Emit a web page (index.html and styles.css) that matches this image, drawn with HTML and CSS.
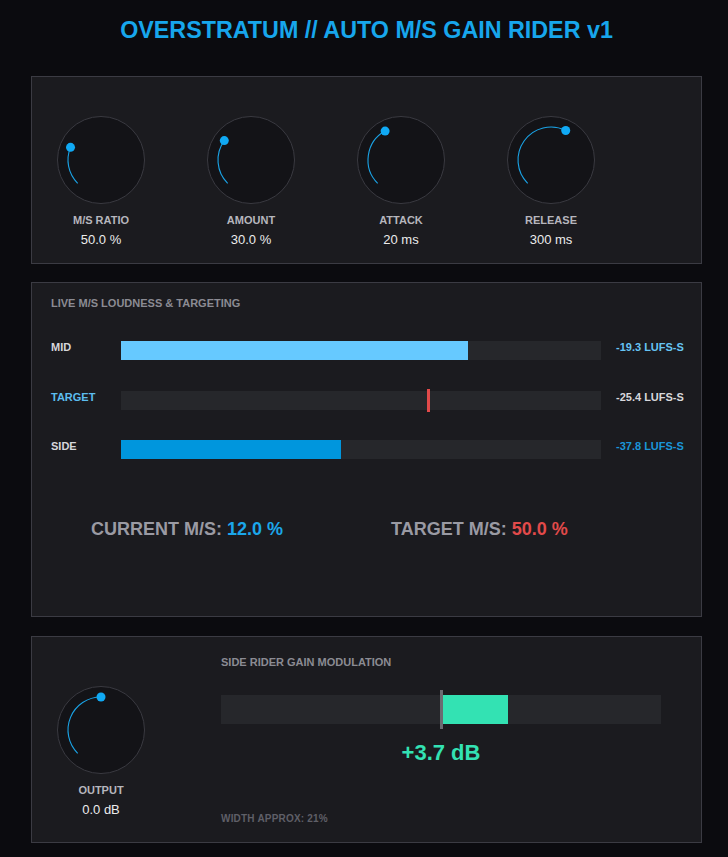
FILE: index.html
```html
<!DOCTYPE html>
<html lang="en">
<head>
<meta charset="utf-8">
<title>Overstratum Auto M/S Gain Rider</title>
<link rel="stylesheet" href="styles.css">
</head>
<body>
<div class="wrap">
  <h1 class="title">OVERSTRATUM // AUTO M/S GAIN RIDER v1</h1>

  <section class="panel panel-knobs">
    <div class="knob-group">
      <svg class="knob" width="88" height="88" viewBox="0 0 88 88">
        <circle class="knob-body" cx="44" cy="44" r="43.5"/>
        <path class="knob-arc" d="M20.67 67.33 A33 33 0 0 1 13.51 31.37"/>
        <circle class="knob-dot" cx="13.51" cy="31.37" r="4.5"/>
      </svg>
      <div class="knob-label">M/S RATIO</div>
      <div class="knob-value">50.0 %</div>
    </div>
    <div class="knob-group">
      <svg class="knob" width="88" height="88" viewBox="0 0 88 88">
        <circle class="knob-body" cx="44" cy="44" r="43.5"/>
        <path class="knob-arc" d="M20.67 67.33 A33 33 0 0 1 17.30 24.60"/>
        <circle class="knob-dot" cx="17.30" cy="24.60" r="4.5"/>
      </svg>
      <div class="knob-label">AMOUNT</div>
      <div class="knob-value">30.0 %</div>
    </div>
    <div class="knob-group">
      <svg class="knob" width="88" height="88" viewBox="0 0 88 88">
        <circle class="knob-body" cx="44" cy="44" r="43.5"/>
        <path class="knob-arc" d="M20.67 67.33 A33 33 0 0 1 28.10 15.08"/>
        <circle class="knob-dot" cx="28.10" cy="15.08" r="4.5"/>
      </svg>
      <div class="knob-label">ATTACK</div>
      <div class="knob-value">20 ms</div>
    </div>
    <div class="knob-group">
      <svg class="knob" width="88" height="88" viewBox="0 0 88 88">
        <circle class="knob-body" cx="44" cy="44" r="43.5"/>
        <path class="knob-arc" d="M20.67 67.33 A33 33 0 0 1 58.72 14.47"/>
        <circle class="knob-dot" cx="58.72" cy="14.47" r="4.5"/>
      </svg>
      <div class="knob-label">RELEASE</div>
      <div class="knob-value">300 ms</div>
    </div>
  </section>

  <section class="panel panel-meters">
    <div class="section-title">LIVE M/S LOUDNESS &amp; TARGETING</div>
    <div class="meters">
      <div class="m-label">MID</div>
      <div class="m-bar"><div class="m-fill fill-mid" style="width:72.3%"></div></div>
      <div class="m-value val-mid">-19.3 LUFS-S</div>

      <div class="m-label label-target">TARGET</div>
      <div class="m-bar"><div class="m-marker" style="left:63.8%"></div></div>
      <div class="m-value val-target">-25.4 LUFS-S</div>

      <div class="m-label">SIDE</div>
      <div class="m-bar"><div class="m-fill fill-side" style="width:45.8%"></div></div>
      <div class="m-value val-side">-37.8 LUFS-S</div>
    </div>
    <div class="readouts">
      <div class="readout">CURRENT M/S: <span class="ro-blue">12.0 %</span></div>
      <div class="readout">TARGET M/S: <span class="ro-red">50.0 %</span></div>
    </div>
  </section>

  <section class="panel panel-output">
    <div class="knob-group output-group">
      <svg class="knob" width="88" height="88" viewBox="0 0 88 88">
        <circle class="knob-body" cx="44" cy="44" r="43.5"/>
        <path class="knob-arc" d="M20.67 67.33 A33 33 0 0 1 44 11"/>
        <circle class="knob-dot" cx="44" cy="11" r="4.5"/>
      </svg>
      <div class="knob-label">OUTPUT</div>
      <div class="knob-value">0.0 dB</div>
    </div>
    <div class="gain">
      <div class="section-title">SIDE RIDER GAIN MODULATION</div>
      <div class="gain-bar">
        <div class="gain-fill" style="left:50%;width:15.2%"></div>
        <div class="gain-center"></div>
      </div>
      <div class="gain-value">+3.7 dB</div>
      <div class="width-approx">WIDTH APPROX: 21%</div>
    </div>
  </section>
</div>
</body>
</html>
```

FILE: styles.css
```css
* { box-sizing: border-box; }

html, body {
  margin: 0;
  padding: 0;
  background: #0b0b0f;
  font-family: "Liberation Sans", Arial, sans-serif;
}

.wrap {
  width: 671px;
  margin-left: 31px;
  padding-top: 16px;
}

.title {
  margin: 0 0 32px 0;
  font-size: 23.3px;
  line-height: 28px;
  font-weight: 700;
  text-align: center;
  color: #17a6ec;
}

.panel {
  background: #1b1b1f;
  border: 1px solid #3b3b43;
}

/* knobs */
.panel-knobs {
  display: flex;
  gap: 50px;
  padding: 39px 19px 16px 19px;
  margin-bottom: 18px;
}

.knob-group {
  width: 100px;
  display: flex;
  flex-direction: column;
  align-items: center;
}

.knob { display: block; }
.knob-body { fill: #131317; stroke: #3a3a41; stroke-width: 1; }
.knob-arc { fill: none; stroke: #1aa3e6; stroke-width: 1.1; }
.knob-dot { fill: #10a9f4; }

.knob-label {
  margin-top: 10px;
  font-size: 11px;
  line-height: 13px;
  font-weight: 700;
  color: #b6b6bd;
}

.knob-value {
  margin-top: 5px;
  font-size: 13px;
  line-height: 15px;
  color: #ececec;
}

/* meters */
.panel-meters {
  padding: 14px 19px 76px 19px;
  margin-bottom: 19px;
}

.section-title {
  font-size: 11px;
  line-height: 13px;
  font-weight: 700;
  color: #8b8b93;
}

.meters {
  margin-top: 31px;
  display: grid;
  grid-template-columns: 70px 480px auto;
  row-gap: 30.5px;
  align-items: start;
}

.m-label {
  font-size: 11px;
  line-height: 12px;
  font-weight: 700;
  color: #d6d6da;
}

.label-target { color: #5cbdef; }

.m-bar {
  position: relative;
  height: 19px;
  background: #26272b;
}

.m-fill { height: 100%; }
.fill-mid { background: #66c9ff; }
.fill-side { background: #0096dd; }

.m-marker {
  position: absolute;
  top: -2px;
  width: 3px;
  height: 23px;
  background: #e24a4a;
}

.m-value {
  margin-left: 15px;
  font-size: 11px;
  line-height: 12px;
  font-weight: 700;
  white-space: nowrap;
}

.val-mid { color: #66c4f4; }
.val-target { color: #d8d8dc; }
.val-side { color: #1a95d8; }

.readouts {
  margin-top: 59px;
  padding-left: 40px;
  display: grid;
  grid-template-columns: 300px auto;
}

.readout {
  font-size: 18px;
  line-height: 22px;
  font-weight: 700;
  color: #9a9aa3;
  white-space: nowrap;
}

.ro-blue { color: #1ba7ea; }
.ro-red { color: #e24a4a; }

/* output */
.panel-output {
  display: flex;
  align-items: flex-start;
  gap: 70px;
  padding: 19px 19px 17px 19px;
}

.output-group { margin-top: 30px; }

.gain { width: 440px; }

.gain-bar {
  position: relative;
  margin-top: 26px;
  height: 29px;
  background: #26272b;
}

.gain-fill {
  position: absolute;
  top: 0;
  bottom: 0;
  background: #33e2b3;
}

.gain-center {
  position: absolute;
  left: 219px;
  top: -5px;
  width: 3px;
  height: 39px;
  background: #6b6b72;
}

.gain-value {
  margin-top: 16px;
  font-size: 22px;
  line-height: 26px;
  font-weight: 700;
  text-align: center;
  color: #33e2b3;
}

.width-approx {
  margin-top: 47px;
  font-size: 10px;
  line-height: 12px;
  font-weight: 700;
  letter-spacing: 0.2px;
  color: #5f5f67;
}
```
